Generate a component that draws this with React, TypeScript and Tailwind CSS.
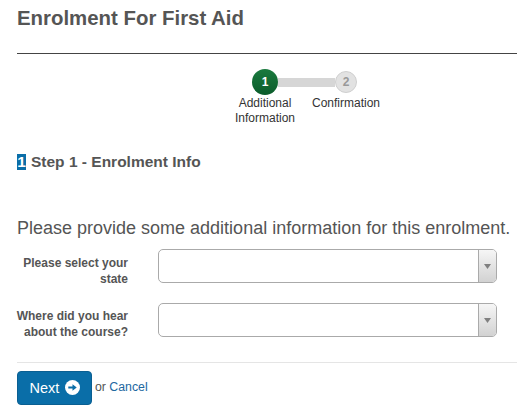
const fields = [
    { label: 'Please select your state', mb: 'mb-[20px]', labelMt: 'mt-[6px]' },
    { label: 'Where did you hear about the course?', mb: 'mb-[25px]', labelMt: 'mt-[5px]' },
];

function SelectBox() {
    return (
        <div className="flex h-[34px] w-[339px] overflow-hidden rounded-[5px] border border-[#aaaaaa] bg-white">
            <div className="flex-1" />
            <div className="flex w-[18px] items-center justify-center border-l border-[#aaaaaa] bg-gradient-to-b from-[#f6f6f6] to-[#d2d2d2]">
                <svg width="7" height="5" viewBox="0 0 7 5">
                    <path d="M0 0h7L3.5 5z" fill="#808080" />
                </svg>
            </div>
        </div>
    );
}

export default function App() {
    return (
        <div className="h-[410px] w-[517px] overflow-hidden bg-white px-[17px] font-['Liberation_Sans',Arial,sans-serif] text-[#555555]">
            <h1 className="pt-[6px] text-[20.4px] leading-[24px] font-bold">Enrolment For First Aid</h1>
            <div className="mt-[23px] w-[500px] border-t border-[#444444]" />

            <div className="mt-[15px] ml-[208px] w-[162px]">
                <div className="flex items-center pl-[27px]">
                    <div className="z-10 flex h-[26px] w-[26px] items-center justify-center rounded-full bg-gradient-to-b from-[#1a7a3e] to-[#0b5c2b] text-[12px] font-bold text-white">
                        1
                    </div>
                    <div className="h-[9px] w-[57px] bg-[#d6d6d6]" />
                    <div className="z-10 flex h-[22px] w-[22px] items-center justify-center rounded-full border border-[#cfcfcf] bg-[#e2e2e2] text-[12px] font-bold text-[#999999]">
                        2
                    </div>
                </div>
                <div className="mt-[1px] flex text-center text-[12px] leading-[15px] text-[#333333]">
                    <span className="w-[80px]">Additional Information</span>
                    <span className="w-[82px]">Confirmation</span>
                </div>
            </div>

            <div className="mt-[28px] flex items-center gap-[5px] text-[15.5px] leading-[16px] font-bold">
                <span className="w-[9px] bg-[#0a6ea8] text-center text-white">1</span>
                <span>Step 1 - Enrolment Info</span>
            </div>

            <p className="mt-[46px] text-[18px] leading-[24px] whitespace-nowrap">
                Please provide some additional information for this enrolment.
            </p>

            <div className="mt-[9px] flex flex-col">
                {fields.map((field) => (
                    <div key={field.label} className={`flex h-[34px] items-start ${field.mb}`}>
                        <label className={`${field.labelMt} mr-[30px] -ml-[9px] w-[120px] shrink-0 text-right text-[12px] leading-[16px] font-bold`}>
                            {field.label}
                        </label>
                        <SelectBox />
                    </div>
                ))}
            </div>

            <div className="w-[500px] border-t border-[#e5e5e5]" />

            <div className="mt-[8px] flex items-center">
                <button className="flex h-[34px] w-[75px] items-center justify-center gap-[6px] rounded-[4px] border border-[#0a5f92] bg-[#0a6ea8] pl-[1px] text-[14.5px] text-white">
                    <span className="pt-[2px]">Next</span>
                    <svg width="15" height="15" viewBox="0 0 16 16" className="mb-[2px]">
                        <circle cx="8" cy="8" r="8" fill="#ffffff" />
                        <path d="M3.5 7h4.5V4.5L12.5 8 8 11.5V9H3.5z" fill="#0a6ea8" />
                    </svg>
                </button>
                <span className="mb-[2px] ml-[3px] text-[12.3px]">
                    or <a className="text-[#22689f]">Cancel</a>
                </span>
            </div>
        </div>
    );
}
